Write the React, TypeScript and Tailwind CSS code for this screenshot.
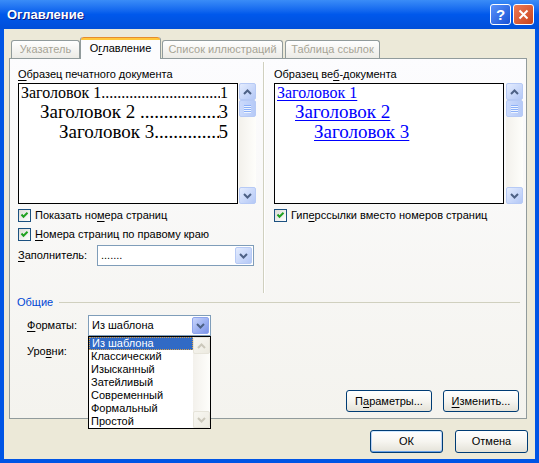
import React from "react";

const ui = "font-['Liberation_Sans','DejaVu_Sans',Arial,sans-serif] text-[11px] leading-[13px] text-black";

function Mn({ children }: { children: React.ReactNode }) {
  return <span className="underline decoration-1 underline-offset-[2px]">{children}</span>;
}

function ArrowBtn({ up, disabled }: { up?: boolean; disabled?: boolean }) {
  return (
    <div
      className={`flex h-[17px] w-[17px] shrink-0 items-center justify-center rounded-[2px] border ${
        disabled
          ? "border-[#E6E4DA] bg-gradient-to-br from-[#F8F7F2] to-[#ECEAE0]"
          : "border-[#B7CAF5] bg-gradient-to-br from-[#E4ECFE] to-[#B4C8F6]"
      }`}
    >
      <svg width="9" height="6" viewBox="0 0 9 6">
        <path
          d={up ? "M1 5L4.5 1.5L8 5" : "M1 1L4.5 4.5L8 1"}
          fill="none"
          stroke={disabled ? "#CBC8BB" : "#4D6185"}
          strokeWidth="2"
        />
      </svg>
    </div>
  );
}

function VScroll({ disabled }: { disabled?: boolean }) {
  return (
    <div className="flex h-full w-[17px] shrink-0 flex-col bg-gradient-to-r from-[#F3F1EC] to-[#FEFEFB]">
      <ArrowBtn up disabled={disabled} />
      {!disabled && (
        <div className="flex h-[17px] w-[17px] flex-col items-center justify-center gap-[1px] rounded-[2px] border border-[#B7CAF5] bg-gradient-to-r from-[#CBDAFC] to-[#B6CAF7]">
          {[0, 1, 2, 3].map((i) => (
            <div key={i} className="h-[1px] w-[7px] bg-[#8CB0F8] shadow-[0_1px_0_#EEF4FE]" />
          ))}
        </div>
      )}
      <div className="flex-1" />
      <ArrowBtn disabled={disabled} />
    </div>
  );
}

function Check() {
  return (
    <span className="flex h-[13px] w-[13px] shrink-0 items-center justify-center border border-[#1C5180] bg-gradient-to-br from-[#DCDCD7] to-white">
      <svg width="9" height="9" viewBox="0 0 9 9">
        <path d="M1.5 3.5L3.5 5.8L7.5 1.8" fill="none" stroke="#21A121" strokeWidth="2" />
      </svg>
    </span>
  );
}

function Combo({ value, hot, className }: { value: string; hot?: boolean; className: string }) {
  return (
    <div className={`flex h-[21px] items-stretch border border-[#7F9DB9] bg-white p-[1px] ${className}`}>
      <div className="flex flex-1 items-center pl-[2px]">{value}</div>
      <div
        className={`flex w-[17px] items-center justify-center rounded-[2px] border ${
          hot
            ? "border-[#8DA4EC] bg-gradient-to-br from-[#C9D5FB] to-[#7B93E8]"
            : "border-[#B7CAF5] bg-gradient-to-br from-[#E4ECFE] to-[#B4C8F6]"
        }`}
      >
        <svg width="9" height="6" viewBox="0 0 9 6">
          <path d="M1 1L4.5 4.5L8 1" fill="none" stroke="#4D6185" strokeWidth="2" />
        </svg>
      </div>
    </div>
  );
}

function XPButton({ children, className, def }: { children: React.ReactNode; className: string; def?: boolean }) {
  return (
    <div
      className={`flex items-center justify-center rounded-[3px] border border-[#003C74] bg-gradient-to-b from-white via-[#F6F5F0] to-[#E4E2D8] ${
        def ? "shadow-[inset_0_1px_0_#CEE7FF,inset_0_-1px_0_#69A2E9,inset_1px_0_0_#B8D1F5,inset_-1px_0_0_#B8D1F5]" : ""
      } ${className}`}
    >
      {children}
    </div>
  );
}

function Leader({ label, num, size, indent, lead }: { label: string; num: string; size: string; indent: string; lead: string }) {
  return (
    <div className={`flex whitespace-pre ${size} ${indent} ${lead}`}>
      <span>{label}</span>
      <span className="min-w-0 flex-1 overflow-hidden">......................................................................</span>
      <span>{num}</span>
    </div>
  );
}

function TitleBar() {
  return (
    <div className="flex h-[29px] items-center bg-gradient-to-b from-[#3A8CF7] via-[#0058EB] to-[#004FD9] pl-[7px] pr-[5px]">
      <div className="flex-1 font-['Liberation_Sans',Arial,sans-serif] text-[13px] font-bold text-white [text-shadow:1px_1px_0_#0A1883]">
        Оглавление
      </div>
      <div className="flex gap-[2px]">
        <div className="flex h-[21px] w-[21px] items-center justify-center rounded-[3px] border border-white bg-gradient-to-br from-[#5A92FA] to-[#1850D5] font-['Liberation_Sans',Arial,sans-serif] text-[15px] font-bold leading-none text-white">
          ?
        </div>
        <div className="flex h-[21px] w-[21px] items-center justify-center rounded-[3px] border border-white bg-gradient-to-br from-[#EE7A55] to-[#C8421A]">
          <svg width="11" height="11" viewBox="0 0 11 11">
            <path d="M1.5 1.5L9.5 9.5M9.5 1.5L1.5 9.5" stroke="white" strokeWidth="2" />
          </svg>
        </div>
      </div>
    </div>
  );
}

const formats = ["Из шаблона", "Классический", "Изысканный", "Затейливый", "Современный", "Формальный", "Простой"];

export default function App() {
  return (
    <div className={`flex h-[463px] w-[539px] flex-col bg-[#0055E5] ${ui}`}>
      <TitleBar />
      <div className="mx-[4px] flex flex-1 flex-col bg-[#ECE9D8] pl-[5px] pr-[7px] pt-[8px]">
        {/* tabs */}
        <div className="relative z-10 flex h-[21px] items-end pl-[2px] text-[#A7A495]">
          <div className="flex h-[18px] w-[69px] items-center justify-center rounded-t-[3px] border border-b-0 border-[#919B9C] bg-gradient-to-b from-white to-[#ECEBE6]">
            Указатель
          </div>
          <div className="-mb-[1px] flex h-[22px] w-[81px] flex-col rounded-t-[3px] border-x border-[#919B9C] bg-[#FCFCFE] text-black">
            <div className="h-[3px] rounded-t-[3px] border-t border-[#E68B2C] bg-[#FFC73C]" />
            <div className="flex flex-1 items-center justify-center pb-[2px]">
              О<Mn>г</Mn>лавление
            </div>
          </div>
          <div className="ml-[1px] flex h-[18px] w-[121px] items-center justify-center rounded-t-[3px] border border-b-0 border-[#919B9C] bg-gradient-to-b from-white to-[#ECEBE6]">
            Список иллюстраций
          </div>
          <div className="ml-[2px] flex h-[18px] w-[95px] items-center justify-center rounded-t-[3px] border border-b-0 border-[#919B9C] bg-gradient-to-b from-white to-[#ECEBE6]">
            Таблица ссылок
          </div>
        </div>

        {/* panel */}
        <div className="flex h-[361px] w-[518px] flex-col border border-[#919B9C] bg-gradient-to-b from-[#FCFCFE] to-[#F4F3EE]">
          <div className="flex h-[234px] pl-[8px]">
            {/* left column */}
            <div className="flex w-[237px] flex-col pt-[9px]">
              <div>
                <Mn>О</Mn>бразец печатного документа
              </div>
              <div className="mt-[2px] flex h-[121px]">
                <div className="w-[220px] border border-black bg-white pl-[2px] pr-[9px] font-['Liberation_Serif','Times_New_Roman',serif]">
                  <Leader label="Заголовок 1" num="1" size="text-[16px]" indent="" lead="leading-[18px]" />
                  <Leader label="Заголовок 2 " num="3" size="text-[19px]" indent="pl-[19px]" lead="leading-[20px]" />
                  <Leader label="Заголовок 3" num="5" size="text-[19px]" indent="pl-[38px]" lead="leading-[20px]" />
                </div>
                <div className="ml-[1px]">
                  <VScroll />
                </div>
              </div>
              <div className="mt-[5px] flex h-[13px] items-center gap-[4px]">
                <Check />
                <span>
                  Показать но<Mn>м</Mn>ера страниц
                </span>
              </div>
              <div className="mt-[6px] flex h-[13px] items-center gap-[4px]">
                <Check />
                <span>
                  <Mn>Н</Mn>омера страниц по правому краю
                </span>
              </div>
              <div className="mt-[4px] flex items-center">
                <div className="w-[79px]">
                  <Mn>З</Mn>аполнитель:
                </div>
                <Combo value="......." className="w-[157px]" />
              </div>
            </div>

            {/* separator */}
            <div className="ml-[8px] mt-[3px] h-[231px] w-[1px] bg-[#D0D0BF] shadow-[1px_0_0_#FFFFFF]" />

            {/* right column */}
            <div className="ml-[10px] flex w-[249px] flex-col pt-[9px]">
              <div>
                Образец ве<Mn>б</Mn>-документа
              </div>
              <div className="mt-[2px] flex h-[121px]">
                <div className="w-[230px] border border-black bg-white pl-[2px] font-['Liberation_Serif','Times_New_Roman',serif] text-[#0000FF]">
                  <div className="text-[16px] leading-[18px]">
                    <span className="underline decoration-1 underline-offset-[2px]">Заголовок 1</span>
                  </div>
                  <div className="pl-[18px] text-[19px] leading-[20px]">
                    <span className="underline decoration-1 underline-offset-[2px]">Заголовок 2</span>
                  </div>
                  <div className="pl-[37px] text-[19px] leading-[20px]">
                    <span className="underline decoration-1 underline-offset-[2px]">Заголовок 3</span>
                  </div>
                </div>
                <div className="ml-[2px]">
                  <VScroll />
                </div>
              </div>
              <div className="mt-[5px] flex h-[13px] items-center gap-[4px]">
                <Check />
                <span>
                  Гип<Mn>е</Mn>рссылки вместо номеров страниц
                </span>
              </div>
            </div>
          </div>

          {/* general section */}
          <div className="mt-[3px] flex h-[13px] items-center pl-[7px] pr-[6px]">
            <span className="text-[#0046D5]">Общие</span>
            <div className="ml-[6px] h-[1px] flex-1 bg-[#D0D0BF]" />
          </div>
          <div className="mt-[6px] flex h-[21px] items-center pl-[17px]">
            <div className="w-[61px]">
              <Mn>Ф</Mn>орматы:
            </div>
            <div className="relative">
              <Combo value="Из шаблона" hot className="w-[123px]" />
              <div className="absolute left-0 top-full z-20 flex h-[93px] w-[123px] border border-black bg-white">
                <div className="flex flex-1 flex-col">
                  {formats.map((f, i) => (
                    <div
                      key={f}
                      className={`flex h-[13px] items-center pl-[2px] ${
                        i === 0 ? "border border-dotted border-[#D8A14B] bg-[#316AC5] pl-[1px] text-white" : ""
                      }`}
                    >
                      {f}
                    </div>
                  ))}
                </div>
                <VScroll disabled />
              </div>
            </div>
          </div>
          <div className="mt-[5px] flex h-[21px] items-center pl-[17px]">
            Уро<Mn>в</Mn>ни:
          </div>

          <div className="mb-[6px] mt-auto flex justify-end gap-[11px] pr-[7px]">
            <XPButton className="h-[22px] w-[86px]">
              П<Mn>а</Mn>раметры...
            </XPButton>
            <XPButton className="h-[22px] w-[76px]">
              <Mn>И</Mn>зменить...
            </XPButton>
          </div>
        </div>

        {/* dialog buttons */}
        <div className="mt-[11px] flex justify-end gap-[12px]">
          <XPButton def className="h-[23px] w-[73px]">
            ОК
          </XPButton>
          <XPButton className="h-[23px] w-[73px]">Отмена</XPButton>
        </div>
      </div>
      <div className="h-[4px]" />
    </div>
  );
}
